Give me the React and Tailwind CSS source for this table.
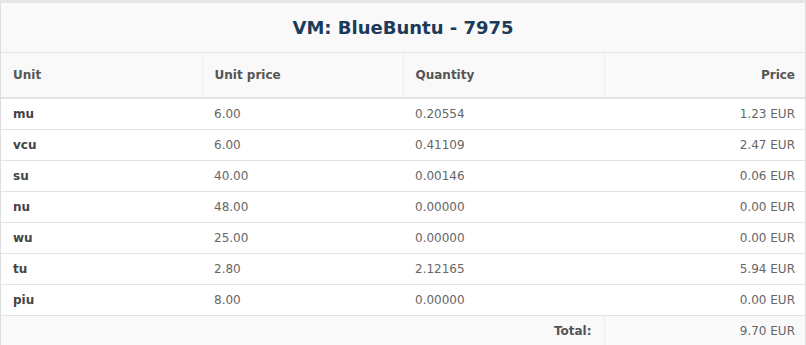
const ROWS = [
  { unit: 'mu', unitPrice: '6.00', qty: '0.20554', price: '1.23 EUR' },
  { unit: 'vcu', unitPrice: '6.00', qty: '0.41109', price: '2.47 EUR' },
  { unit: 'su', unitPrice: '40.00', qty: '0.00146', price: '0.06 EUR' },
  { unit: 'nu', unitPrice: '48.00', qty: '0.00000', price: '0.00 EUR' },
  { unit: 'wu', unitPrice: '25.00', qty: '0.00000', price: '0.00 EUR' },
  { unit: 'tu', unitPrice: '2.80', qty: '2.12165', price: '5.94 EUR' },
  { unit: 'piu', unitPrice: '8.00', qty: '0.00000', price: '0.00 EUR' },
];

export default function App() {
  return (
    <div className="w-[806px] h-[345px] overflow-hidden bg-white font-['DejaVu_Sans',sans-serif]">
      <div className="h-[3px] bg-[#e6e6e6]" />
      <div className="border-x border-[#dddddd]">
        {/* Title */}
        <div className="h-[50px] flex items-center justify-center bg-[#f9f9f9] border-b border-[#e3e3e3]">
          <h1 className="text-[18px] font-bold text-[#1c3b5a]">VM: BlueBuntu - 7975</h1>
        </div>

        <table className="w-full table-fixed border-collapse text-[12px]">
          <thead>
            <tr className="h-[45px] bg-[#f9f9f9] border-b-2 border-[#e3e3e3]">
              <th className="pl-3 text-left font-bold text-[#555] border-r border-[#eeeeee]">Unit</th>
              <th className="pl-3 text-left font-bold text-[#555] border-r border-[#eeeeee]">Unit price</th>
              <th className="pl-3 text-left font-bold text-[#555] border-r border-[#eeeeee]">Quantity</th>
              <th className="pr-[10px] text-right font-bold text-[#555]">Price</th>
            </tr>
          </thead>
          <tbody>
            {ROWS.map((r) => (
              <tr key={r.unit} className="h-[31px] border-b border-[#e3e3e3]">
                <td className="pl-3 font-bold text-[#444]">{r.unit}</td>
                <td className="pl-3 text-[#666]">{r.unitPrice}</td>
                <td className="pl-3 text-[#666]">{r.qty}</td>
                <td className="pr-[10px] text-right text-[#666]">{r.price}</td>
              </tr>
            ))}
            <tr className="h-[31px] bg-[#f9f9f9] border-b border-[#e3e3e3]">
              <td colSpan={3} className="pr-3 text-right font-bold text-[#555] border-r border-[#eeeeee]">Total:</td>
              <td className="pr-[10px] text-right text-[#666]">9.70 EUR</td>
            </tr>
          </tbody>
        </table>
      </div>
    </div>
  );
}
